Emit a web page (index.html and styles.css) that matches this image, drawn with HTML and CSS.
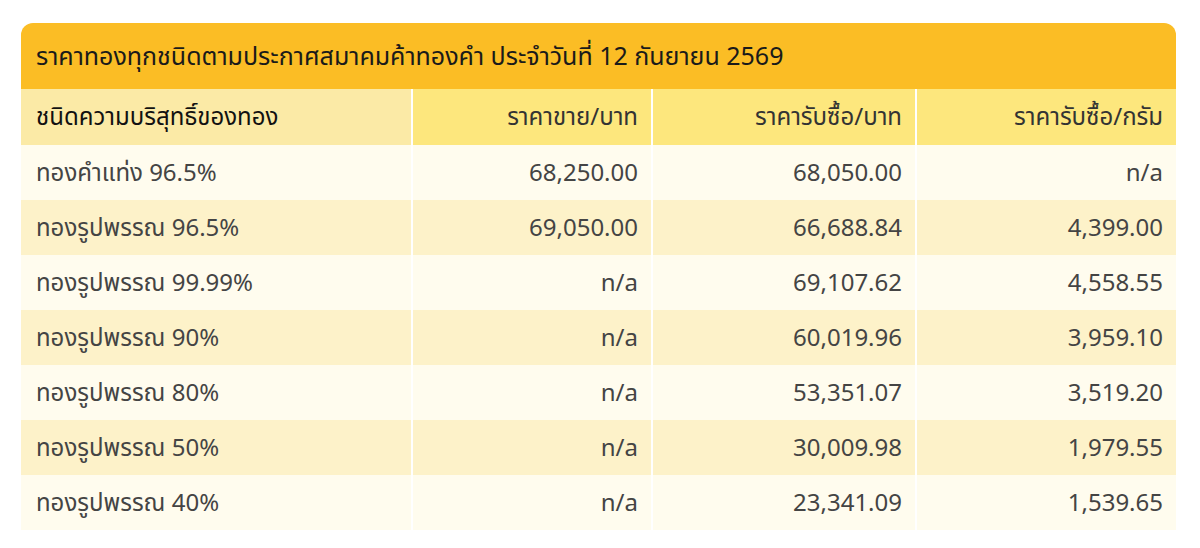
FILE: index.html
```html
<!DOCTYPE html>
<html lang="th">
<head>
<meta charset="utf-8">
<link rel="stylesheet" href="styles.css">
</head>
<body>
<div class="panel">
  <div class="title">ราคาทองทุกชนิดตามประกาศสมาคมค้าทองคำ ประจำวันที่ 12 กันยายน 2569</div>
  <table class="prices">
    <colgroup>
      <col class="c1"><col class="c2"><col class="c3"><col class="c4">
    </colgroup>
    <thead>
      <tr>
        <th class="name">ชนิดความบริสุทธิ์ของทอง</th>
        <th>ราคาขาย/บาท</th>
        <th>ราคารับซื้อ/บาท</th>
        <th>ราคารับซื้อ/กรัม</th>
      </tr>
    </thead>
    <tbody>
      <tr><td class="name">ทองคำแท่ง 96.5%</td><td>68,250.00</td><td>68,050.00</td><td>n/a</td></tr>
      <tr><td class="name">ทองรูปพรรณ 96.5%</td><td>69,050.00</td><td>66,688.84</td><td>4,399.00</td></tr>
      <tr><td class="name">ทองรูปพรรณ 99.99%</td><td>n/a</td><td>69,107.62</td><td>4,558.55</td></tr>
      <tr><td class="name">ทองรูปพรรณ 90%</td><td>n/a</td><td>60,019.96</td><td>3,959.10</td></tr>
      <tr><td class="name">ทองรูปพรรณ 80%</td><td>n/a</td><td>53,351.07</td><td>3,519.20</td></tr>
      <tr><td class="name">ทองรูปพรรณ 50%</td><td>n/a</td><td>30,009.98</td><td>1,979.55</td></tr>
      <tr><td class="name">ทองรูปพรรณ 40%</td><td>n/a</td><td>23,341.09</td><td>1,539.65</td></tr>
    </tbody>
  </table>
</div>
</body>
</html>
```
FILE: styles.css
```css
html, body {
  margin: 0;
  padding: 0;
  background: #ffffff;
}
body {
  padding: 23px 24px 0 21px;
  font-family: "Noto Sans Thai", Tahoma, "DejaVu Sans", "Noto Sans", sans-serif;
  color: #444444;
}
.panel {
  width: 1155px;
}
.title {
  background: #fbbd25;
  border-radius: 12px 12px 0 0;
  height: 66px;
  display: flex;
  align-items: center;
  padding-left: 15px;
  padding-top: 2px;
  box-sizing: border-box;
  font-size: 25px;
  color: #1a1a1a;
}
.prices {
  width: 100%;
  border-collapse: collapse;
  table-layout: fixed;
  font-size: 24px;
}
.c1 { width: 391px; }
.c2 { width: 240px; }
.c3 { width: 264px; }
.c4 { width: 260px; }
.prices th, .prices td {
  height: 55px;
  padding: 2px 13px 0 15px;
  text-align: right;
  border-left: 2px solid #ffffff;
  box-sizing: border-box;
  font-weight: normal;
  white-space: nowrap;
}
.prices th:first-child, .prices td:first-child {
  border-left: 0;
}
.prices .name {
  text-align: left;
}
.prices thead th {
  height: 56px;
  background: #fde77d;
  color: #333333;
}
.prices thead th.name {
  background: #fbeaa6;
  color: #111111;
}
.prices tbody tr:nth-child(odd) td {
  background: #fffcee;
}
.prices tbody tr:nth-child(even) td {
  background: #fdf2c9;
}
```
